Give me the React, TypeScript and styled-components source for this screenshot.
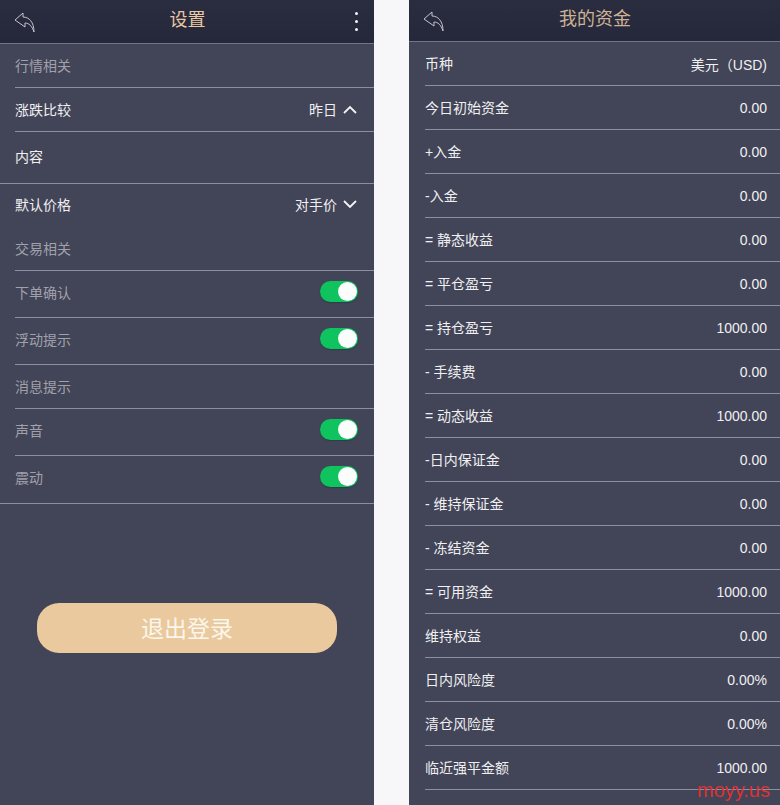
import React from 'react'
import styled, { createGlobalStyle } from 'styled-components'

const GlobalStyle = createGlobalStyle`
  html, body {
    margin: 0;
    padding: 0;
    background: #f7f7f9;
  }
  body {
    font-family: "Liberation Sans", "Noto Sans CJK SC", sans-serif;
  }
`

const Page = styled.div`
  position: relative;
  display: flex;
  justify-content: space-between;
  width: 780px;
  height: 805px;
  overflow: hidden;
`

const Panel = styled.div<{ width: number }>`
  width: ${props => props.width}px;
  height: 805px;
  background: #424457;
  overflow: hidden;
`

const Header = styled.div<{ height: number }>`
  display: flex;
  align-items: center;
  justify-content: space-between;
  height: ${props => props.height}px;
  box-sizing: border-box;
  padding: 0 13px 4px 14px;
  background: linear-gradient(#2a2d3f, #25283a);
  border-bottom: 1px solid #73757f;
`

const Title = styled.div<{ muted?: boolean }>`
  flex: 1;
  margin-bottom: 3px;
  text-align: center;
  font-size: 18px;
  color: ${props => props.muted ? '#cdb295' : '#ecc8a2'};
`

const BackIcon = styled.svg`
  display: block;
  width: 22px;
  height: 22px;
  margin-top: 4px;
  flex: none;
`

const MoreDots = styled.div`
  display: flex;
  flex-direction: column;
  gap: 5px;
  width: 22px;
  margin-top: 4px;
  align-items: flex-end;
  padding-right: 3px;
  box-sizing: border-box;

  span {
    width: 3px;
    height: 3px;
    border-radius: 50%;
    background: #f4f4f6;
  }
`

const Row = styled.div<{ height: number; full?: boolean; plain?: boolean; lift?: number }>`
  display: flex;
  align-items: center;
  justify-content: space-between;
  height: ${props => props.height}px;
  box-sizing: border-box;
  margin-left: ${props => props.full ? 0 : 15}px;
  padding: 0 16px ${props => props.lift ?? 2}px ${props => props.full ? 15 : 0}px;
  border-bottom: ${props => props.plain ? 'none' : '1px solid #8e8f9c'};
`

const Label = styled.span<{ dim?: boolean }>`
  font-size: 14px;
  color: ${props => props.dim ? '#a0a1ab' : '#f0f0f2'};
`

const Value = styled.span`
  display: flex;
  align-items: center;
  gap: 6px;
  font-size: 14px;
  color: #f0f0f2;
`

const Amount = styled.span`
  margin-top: 2px;
  font-size: 14px;
  color: #f0f0f2;
`

const Chevron = styled.svg`
  display: block;
  width: 14px;
  height: 9px;
  margin: 2px 1px 0 0;
`

const Toggle = styled.div`
  display: flex;
  justify-content: flex-end;
  align-items: center;
  width: 38px;
  height: 21px;
  margin-bottom: 1px;
  border-radius: 11px;
  background: #0fc35f;
  box-shadow: 0 1px 1px rgba(20, 60, 60, 0.5);

  i {
    width: 19px;
    height: 19px;
    margin-right: 1px;
    border-radius: 50%;
    background: #fbfdfc;
  }
`

const LogoutWrap = styled.div`
  display: flex;
  justify-content: center;
  padding-top: 99px;
`

const LogoutButton = styled.div`
  display: flex;
  align-items: center;
  justify-content: center;
  width: 300px;
  height: 50px;
  padding-bottom: 3px;
  box-sizing: border-box;
  border-radius: 22px;
  background: #e9c99d;
  color: #fbf6ec;
  font-size: 23px;
`

const MoneyRow = styled.div`
  display: flex;
  align-items: center;
  justify-content: space-between;
  height: 44px;
  box-sizing: border-box;
  margin-left: 16px;
  padding: 0 13px 2px 0;
  border-bottom: 1px solid #8e8f9c;
`

const Watermark = styled.div`
  position: absolute;
  right: 10px;
  bottom: 3px;
  font-size: 20px;
  line-height: 24px;
  color: #dc3236;
`

const funds: [string, string][] = [
  ['币种', '美元（USD)'],
  ['今日初始资金', '0.00'],
  ['+入金', '0.00'],
  ['-入金', '0.00'],
  ['= 静态收益', '0.00'],
  ['= 平仓盈亏', '0.00'],
  ['= 持仓盈亏', '1000.00'],
  ['- 手续费', '0.00'],
  ['= 动态收益', '1000.00'],
  ['-日内保证金', '0.00'],
  ['- 维持保证金', '0.00'],
  ['- 冻结资金', '0.00'],
  ['= 可用资金', '1000.00'],
  ['维持权益', '0.00'],
  ['日内风险度', '0.00%'],
  ['清仓风险度', '0.00%'],
  ['临近强平金额', '1000.00']
]

const Back: React.FC = () => (
  <BackIcon viewBox="0 0 22 22" fill="none" stroke="#c4c5cc" strokeWidth="1" strokeLinejoin="round">
    <path d="M1 9 L9 2 L9 6 C15 6 20 11 20 21 C18 15 15 12 11 12 L11 16 Z" />
  </BackIcon>
)

const Up: React.FC = () => (
  <Chevron viewBox="0 0 14 9" fill="none" stroke="#f4f4f6" strokeWidth="1.8">
    <path d="M1 8 L7 2 L13 8" />
  </Chevron>
)

const Down: React.FC = () => (
  <Chevron viewBox="0 0 14 9" fill="none" stroke="#f4f4f6" strokeWidth="1.8">
    <path d="M1 1 L7 7 L13 1" />
  </Chevron>
)

const App: React.FC = () => (
  <Page>
    <GlobalStyle />
    <Panel width={374}>
      <Header height={44}>
        <Back />
        <Title>设置</Title>
        <MoreDots><span /><span /><span /></MoreDots>
      </Header>
      <Row height={44}><Label dim>行情相关</Label></Row>
      <Row height={44}>
        <Label>涨跌比较</Label>
        <Value>昨日 <Up /></Value>
      </Row>
      <Row height={52} full lift={4}><Label>内容</Label></Row>
      <Row height={43} full plain lift={4}>
        <Label>默认价格</Label>
        <Value>对手价 <Down /></Value>
      </Row>
      <Row height={44}><Label dim>交易相关</Label></Row>
      <Row height={47} lift={4}><Label dim>下单确认</Label><Toggle><i /></Toggle></Row>
      <Row height={47} lift={4}><Label dim>浮动提示</Label><Toggle><i /></Toggle></Row>
      <Row height={44}><Label dim>消息提示</Label></Row>
      <Row height={47} lift={4}><Label dim>声音</Label><Toggle><i /></Toggle></Row>
      <Row height={48} full lift={6}><Label dim>震动</Label><Toggle><i /></Toggle></Row>
      <LogoutWrap><LogoutButton>退出登录</LogoutButton></LogoutWrap>
    </Panel>
    <Panel width={371}>
      <Header height={42}>
        <Back />
        <Title muted>我的资金</Title>
        <MoreDots />
      </Header>
      {funds.map(([name, amount]) => (
        <MoneyRow key={name}>
          <Label>{name}</Label>
          <Amount>{amount}</Amount>
        </MoneyRow>
      ))}
    </Panel>
    <Watermark>moyy.us</Watermark>
  </Page>
)

export default App
